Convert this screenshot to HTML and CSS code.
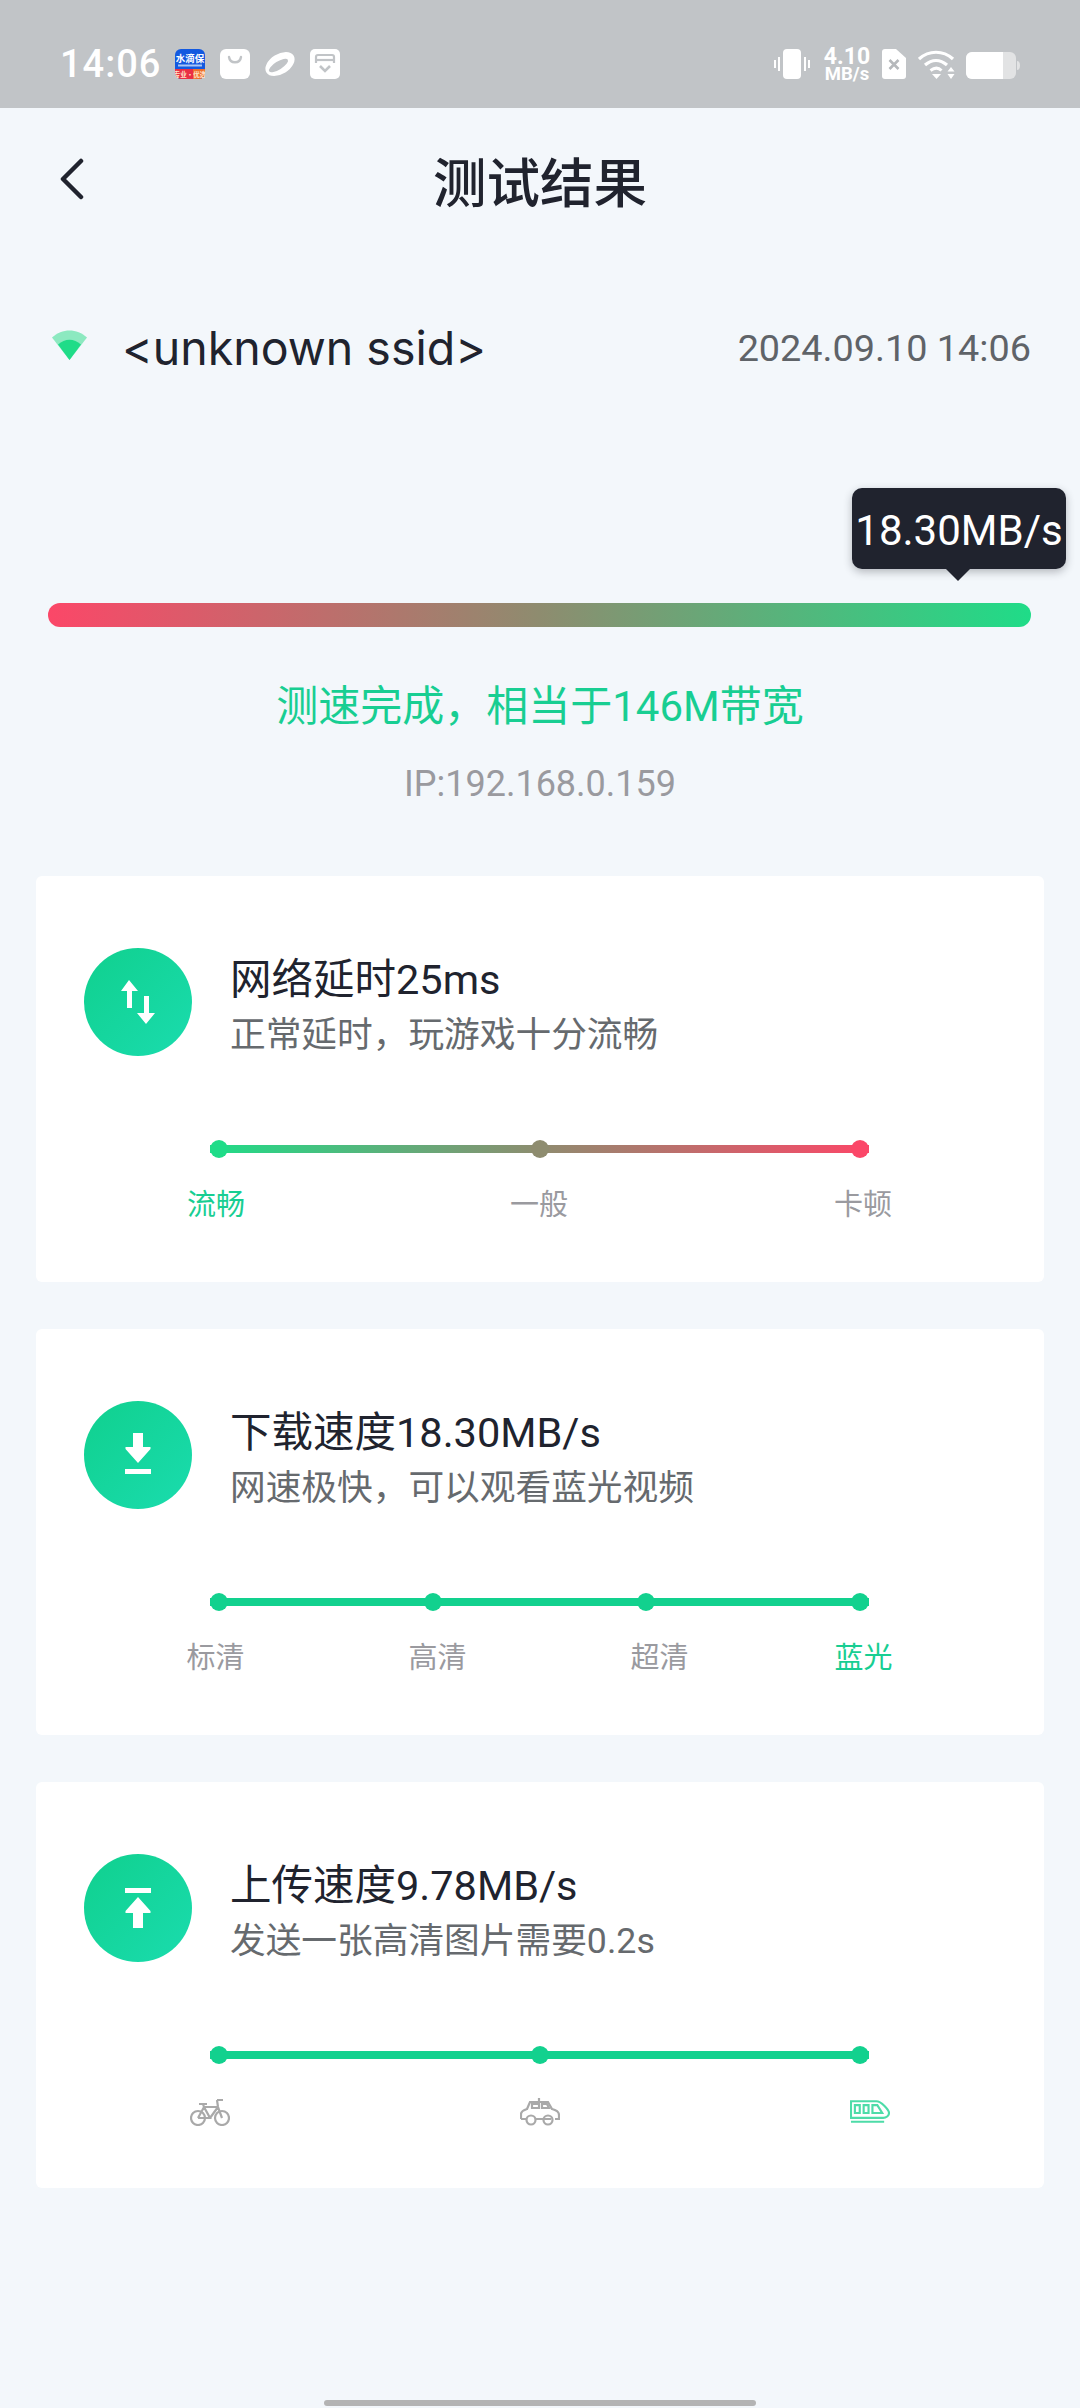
FILE: index.html
```html
<!DOCTYPE html>
<html lang="zh-CN">
<head>
<meta charset="utf-8">
<title>测试结果</title>
<link rel="stylesheet" href="styles.css">
</head>
<body>
<div class="page">
  <div class="statusbar">
    <span class="time">14:06</span>
    <div class="notif">
      <svg class="ni" viewBox="0 0 30 30"><rect width="30" height="30" rx="6" fill="#1359e0"/><path d="M0 20h30v4a6 6 0 0 1-6 6H6a6 6 0 0 1-6-6z" fill="#ea2f45"/><path d="M18 20h12v4a6 6 0 0 1-6 6h-6z" fill="#f0702c"/><text class="ni-t1" x="15" y="13" text-anchor="middle">水滴保</text><rect x="3" y="15.500" width="24" height="2" fill="#a9c6f6"/><text class="ni-t2" x="15" y="27.500" text-anchor="middle">专业·优选</text></svg>
      <svg class="ni" viewBox="0 0 30 30"><rect width="30" height="30" rx="6" fill="#fff"/><path d="M9 8c1 7 11 7 12 0" fill="none" stroke="#c1c4c7" stroke-width="2.400" stroke-linecap="round"/></svg>
      <svg class="ni ni-w" viewBox="0 0 32 30"><ellipse cx="16" cy="15" rx="16" ry="10" transform="rotate(-32 16 15)" fill="#fff"/><ellipse cx="14.500" cy="16.500" rx="11" ry="4" transform="rotate(-32 14.500 16.500)" fill="#c1c4c7"/></svg>
      <svg class="ni" viewBox="0 0 30 30"><rect width="30" height="30" rx="5" fill="#fff"/><path d="M6 14V8a2 2 0 0 1 2-2h14a2 2 0 0 1 2 2v6" fill="none" stroke="#c1c4c7" stroke-width="2.200"/><path d="M6 11h18" stroke="#c1c4c7" stroke-width="2.200"/><path d="M10 17l5 5 5-5" fill="none" stroke="#c1c4c7" stroke-width="2.600"/></svg>
    </div>
    <div class="sys">
      <svg class="s-vib" viewBox="0 0 36 30"><rect x="9" y="0" width="18" height="30" rx="4" fill="#fff"/><path d="M5 8v14M1 11v8M31 8v14M35 11v8" stroke="#fff" stroke-width="2"/></svg>
      <div class="netspeed"><span class="ns-num">4.10</span><span class="ns-unit">MB/s</span></div>
      <svg class="s-sim" viewBox="0 0 24 30"><path d="M3 0h11l10 9v18a3 3 0 0 1-3 3H3a3 3 0 0 1-3-3V3a3 3 0 0 1 3-3z" fill="#fff"/><path d="M7.500 11l9 9M16.500 11l-9 9" stroke="#b5b8bb" stroke-width="2.600"/></svg>
      <svg class="s-wifi" viewBox="0 0 37 29"><path d="M1 9c10-9 24-9 34 0" fill="none" stroke="#fff" stroke-width="3.200"/><path d="M7 15c7-6 15-6 22 0" fill="none" stroke="#fff" stroke-width="3.200"/><path d="M12.500 20.500c4-3 8-3 11 0" fill="none" stroke="#fff" stroke-width="3"/><path d="M14 24h9l-4.500 5z" fill="#fff"/><path d="M33 17l3.500 4.500h-7zM29.500 24h7L33 29z" fill="#fff"/></svg>
      <svg class="s-bat" viewBox="0 0 54 27"><rect width="50" height="27" rx="6" fill="#e2e3e4"/><path d="M6 0h31v27H6a6 6 0 0 1-6-6V6a6 6 0 0 1 6-6z" fill="#fff"/><path d="M51 9c2 0 3 2 3 4.500S53 18 51 18z" fill="#e2e3e4"/></svg>
    </div>
  </div>

  <div class="nav">
    <svg class="back" viewBox="0 0 24 42"><path d="M21 3L3 21l18 18" fill="none" stroke="#20232e" stroke-width="4.500" stroke-linecap="round" stroke-linejoin="round"/></svg>
    <h1 class="nav-title">测试结果</h1>
  </div>

  <div class="ssid-row">
    <svg class="wifi" viewBox="0 0 35 30"><path d="M0 7.500C10-2 25-2 35 7.500L17.500 30z" fill="#8ce9c0"/><path d="M6 14.500C13 8 22 8 29 14.500L17.500 30z" fill="#1fdc88"/></svg>
    <span class="ssid">&lt;unknown ssid&gt;</span>
    <span class="date">2024.09.10 14:06</span>
  </div>

  <div class="speed">
    <div class="tooltip">18.30MB/s</div>
    <div class="speed-bar"></div>
  </div>
  <p class="result">测速完成，相当于146M带宽</p>
  <p class="ip">IP:192.168.0.159</p>

  <div class="cards">
    <section class="card">
      <div class="head">
        <div class="badge"><svg class="badge-i" viewBox="0 0 36 44"><path d="M9 0l9 11h-6v17H7V11H1z" fill="#fff"/><path d="M26 44l9-11h-6V16h-5v17h-7z" fill="#fff"/></svg></div>
        <div class="texts"><div class="title">网络延时25ms</div><div class="sub">正常延时，玩游戏十分流畅</div></div>
      </div>
      <div class="track track-grad"><i class="dot d-g"></i><i class="dot d-m"></i><i class="dot d-r"></i></div>
      <div class="labels labels-3"><span class="on">流畅</span><span>一般</span><span>卡顿</span></div>
    </section>

    <section class="card">
      <div class="head">
        <div class="badge"><svg class="badge-i" viewBox="0 0 36 44"><path d="M13 0h10v15h7.500v2L18 31 5.500 17v-2H13z" fill="#fff" transform="translate(0 -1)"/><rect x="5" y="36" width="26" height="5" fill="#fff"/></svg></div>
        <div class="texts"><div class="title">下载速度18.30MB/s</div><div class="sub">网速极快，可以观看蓝光视频</div></div>
      </div>
      <div class="track track-solid"><i class="dot"></i><i class="dot"></i><i class="dot"></i><i class="dot"></i></div>
      <div class="labels labels-4"><span>标清</span><span>高清</span><span>超清</span><span class="on">蓝光</span></div>
    </section>

    <section class="card">
      <div class="head">
        <div class="badge"><svg class="badge-i" viewBox="0 0 36 44"><rect x="5" y="2" width="26" height="5" fill="#fff"/><path d="M18 11l12.500 14v2H23v15H13V27H5.500v-2z" fill="#fff"/></svg></div>
        <div class="texts"><div class="title">上传速度9.78MB/s</div><div class="sub">发送一张高清图片需要0.2s</div></div>
      </div>
      <div class="track track-solid"><i class="dot"></i><i class="dot"></i><i class="dot"></i></div>
      <div class="labels labels-icons">
        <svg class="veh" viewBox="0 0 40 28" fill="none" stroke="#a9a9a9" stroke-width="2.200"><circle cx="8" cy="20" r="7"/><circle cx="32" cy="20" r="7"/><path d="M8 20L14 9h14l4 11M14 9l6 11H8M20 20L28 9M27 2h6M28 9l-1-7M9 6h8M13 6l1 3"/></svg>
        <svg class="veh" viewBox="0 0 40 28" fill="none" stroke="#a9a9a9" stroke-width="2.200"><path d="M1 21v-5c0-3 3-4 6-5l3-7h18l4 7c4 1 7 3 7 6v4h-4M31 21H15M7 21H1"/><circle cx="11" cy="22" r="4.500"/><circle cx="28" cy="22" r="4.500"/><path d="M19 4V0M12 10h7V6h-7zM22 10h7l-2-4h-5z"/></svg>
        <svg class="veh" viewBox="0 0 41 24" fill="none" stroke="#4ddca8" stroke-width="2.200"><path d="M1 1h26c5 0 13 9 13 12 0 3-3 5-6 5H1z"/><path d="M5 5h5v8H5zM14 5h5v8h-5zM23 5h5l5 8h-10zM1 22h34"/></svg>
      </div>
    </section>
  </div>

  <div class="home"></div>
</div>
</body>
</html>
```

FILE: styles.css
```css
* { box-sizing: border-box; }
html, body { margin: 0; padding: 0; }
body {
  font-family: Roboto, "Noto Sans CJK SC", sans-serif;
  background: #f3f7fb;
  color: #20232e;
}
.page { width: 1080px; height: 2408px; overflow: hidden; }

.statusbar {
  height: 108px;
  background: #c1c4c7;
  display: flex;
  align-items: flex-start;
  padding: 49px 60px 0 60px;
  color: #fff;
}
.time { font: 500 38px/30px Roboto, sans-serif; letter-spacing: 1px; width: 115px; }
.notif { display: flex; gap: 15px; }
.ni { width: 30px; height: 30px; display: block; }
.ni-w { width: 32px; margin-left: -1px; margin-right: -1px; }
.ni-t1 { font: 700 9.500px "Noto Sans CJK SC", sans-serif; fill: #fff; }
.ni-t2 { font: 700 6.500px "Noto Sans CJK SC", sans-serif; fill: #ffe2c8; }
.sys { margin-left: auto; display: flex; align-items: flex-start; }
.s-vib { width: 36px; height: 30px; }
.netspeed { width: 48px; margin: -3px 0 0 13px; display: flex; flex-direction: column; align-items: center; font-family: Roboto, sans-serif; font-weight: 700; }
.ns-num { font-size: 23px; line-height: 21px; }
.ns-unit { font-size: 18.500px; line-height: 15px; }
.s-sim { width: 24px; height: 30px; margin-left: 11px; }
.s-wifi { width: 37px; height: 29px; margin: 1px 0 0 12px; }
.s-bat { width: 54px; height: 27px; margin: 3px 0 0 11px; }

.nav { height: 148px; display: flex; align-items: center; justify-content: center; position: relative; }
.back { position: absolute; left: 60px; top: 50px; width: 24px; height: 42px; }
.nav-title { margin: -4px 0 0; font-size: 53.500px; line-height: 60px; font-weight: 500; color: #20232e; font-family: "Noto Sans CJK SC", sans-serif; }

.ssid-row { margin-top: 60px; height: 60px; padding: 0 49px 0 52px; display: flex; align-items: center; }
.wifi { width: 35px; height: 30px; margin-top: -3px; }
.ssid { margin: 3px 0 0 35px; font-family: Inter, sans-serif; font-size: 46.500px; color: #20232e; }
.date { margin: 3px 0 0 auto; font-size: 37.800px; color: #5f6368; }

.speed { margin: 227px 49px 0 48px; position: relative; }
.speed-bar { height: 24px; border-radius: 12px; background: linear-gradient(90deg, #fb4768, #8e8c6f 50%, #1fdc88); }
.tooltip {
  position: absolute; right: -35px; bottom: 58px;
  width: 214px; height: 81px;
  border-radius: 10px;
  background: #20232e;
  color: #fff;
  font-size: 42px; line-height: 86px; text-align: center;
  white-space: nowrap;
  box-shadow: 0 3px 8px rgba(32,35,46,.3);
}
.tooltip::after {
  content: ""; position: absolute; left: 94px; top: 81px;
  border: 12px solid transparent; border-top-color: #20232e; border-bottom-width: 0;
}
.result { margin: 58px 0 0; text-align: center; font-size: 42px; line-height: 44px; color: #18ce92; }
.ip { margin: 33px 0 0; text-align: center; font-size: 36px; line-height: 44px; color: #9a9a9f; }

.cards { margin-top: 70px; padding: 0 36px; display: flex; flex-direction: column; gap: 47.500px; }
.card { height: 405.500px; background: #fff; border-radius: 6px; padding: 72px 48px 0; }
.head { display: flex; gap: 39px; height: 108px; }
.badge { width: 108px; height: 108px; border-radius: 50%; background: linear-gradient(135deg, #10d08e, #1adcae); display: flex; align-items: center; justify-content: center; }
.badge-i { width: 36px; height: 44px; }
.texts { padding-top: 7px; margin-left: -1px; }
.title { font-size: 41.500px; line-height: 50px; color: #20232e; }
.sub { margin-top: 5px; font-size: 35.700px; line-height: 50px; color: #666a6e; }

.track { margin: 84px 0 0 126px; width: 659px; height: 18px; display: flex; justify-content: space-between; }
.track-grad { background: linear-gradient(90deg, #1fdc88, #8e8c6f 50%, #fb4768) center / 100% 8px no-repeat; }
.track-solid { background: linear-gradient(#12d18e, #12d18e) center / 100% 8px no-repeat; }
.dot { width: 18px; height: 18px; border-radius: 50%; background: #12d18e; display: block; }
.d-g { background: #1fdc88; }
.d-m { background: #8e8c6f; }
.d-r { background: #fb4768; }

.labels { margin: 27px 0 0 103px; display: grid; font-size: 29px; line-height: 40px; color: #9a9a9f; }
.labels .on { color: #18ce92; }
.labels-3 { grid-template-columns: 323px 324px 1fr; }
.labels-4 { grid-template-columns: 222px 222px 204px 1fr; margin-left: 102.500px; }
.labels-icons { grid-template-columns: 330px 330px 1fr; margin: 34px 0 0 106px; }
.veh { width: 40px; height: 28px; display: block; }

.home { width: 432px; height: 6px; margin: 212px auto 0; border-radius: 3px; background: #b4b4b4; }
```
